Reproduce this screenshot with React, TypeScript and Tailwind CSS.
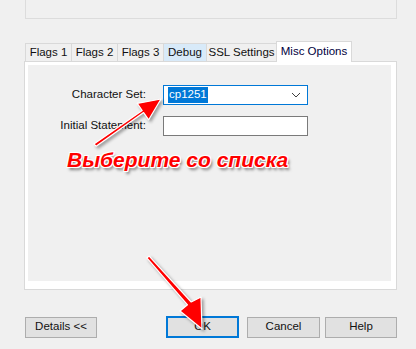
import React from "react";

const tabs = [
  { label: "Flags 1", w: "w-[46px]" },
  { label: "Flags 2", w: "w-[46px]" },
  { label: "Flags 3", w: "w-[46px]" },
  { label: "Debug", w: "w-[43px]", hover: true },
  { label: "SSL Settings", w: "w-[70px]" },
];

function Arrow({ points }: { points: string }) {
  return (
    <polygon
      points={points}
      fill="#ff0000"
      stroke="#ffffff"
      strokeWidth="1.2"
      strokeLinejoin="round"
    />
  );
}

export default function App() {
  return (
    <div
      className="relative h-[349px] w-[416px] overflow-hidden bg-[#f0f0f0] text-[11.5px] leading-none text-[#111]"
      style={{ fontFamily: '"Segoe UI", "Liberation Sans", Arial, sans-serif' }}
    >
      {/* top group box, cut off */}
      <div className="ml-[25px] h-[19px] w-[372px] border-x border-b border-[#dcdcdc]" />

      {/* tab strip */}
      <div className="mt-[22px] ml-[25px] flex h-[20px] items-end">
        {tabs.map((t) => (
          <div
            key={t.label}
            className={`${t.w} flex h-[18px] items-center justify-center border-l border-t border-[#d9d9d9] pt-px ${
              t.hover ? "bg-[#d8eaf9]" : "bg-[#f0f0f0]"
            }`}
          >
            {t.label}
          </div>
        ))}
        <div className="relative z-10 -mb-px flex h-[21px] w-[76px] items-start justify-center border-x border-t border-[#d9d9d9] bg-white pt-[4px] text-[#000040]">
          Misc Options
        </div>
      </div>

      {/* tab page */}
      <div className="ml-[24px] flex h-[229px] w-[373px] flex-col border border-[#d9d9d9] bg-white pb-[8px] pl-[3px] pr-[5px] pt-[3px]">
        <div className="flex-1 bg-[#f0f0f0] pt-[20px]">
          <div className="grid grid-cols-[118px_145px] items-center gap-x-[17px] gap-y-[11px]">
            <div className="text-right">Character Set:</div>
            <div className="flex h-[20px] items-center border border-[#0078d7] bg-white pl-[4px] pr-[6px]">
              <span className="bg-[#0078d7] px-px py-[2px] text-white">cp1251</span>
              <svg className="ml-auto" width="10" height="6" viewBox="0 0 10 6">
                <path d="M1 1 L5 5 L9 1" fill="none" stroke="#404040" strokeWidth="1" />
              </svg>
            </div>
            <div className="text-right">Initial Statement:</div>
            <div className="h-[20px] border border-[#7a7a7a] bg-white" />
          </div>
        </div>
      </div>

      {/* bottom buttons */}
      <div className="mt-[26px] flex items-center">
        <div className="ml-[25px] flex h-[21px] w-[72px] items-center justify-center border border-[#adadad] bg-[#e1e1e1]">
          Details &lt;&lt;
        </div>
        <div className="ml-[69px] flex h-[22px] w-[73px] items-center justify-center border-2 border-[#0078d7] bg-[#e1e1e1]">
          OK
        </div>
        <div className="ml-[8px] flex h-[21px] w-[73px] items-center justify-center border border-[#adadad] bg-[#e1e1e1]">
          Cancel
        </div>
        <div className="ml-[5px] flex h-[21px] w-[72px] items-center justify-center border border-[#adadad] bg-[#e1e1e1]">
          Help
        </div>
      </div>

      {/* annotations */}
      <svg
        className="pointer-events-none absolute left-0 top-0 drop-shadow-[2px_2px_1.5px_rgba(0,0,0,0.35)]"
        width="416"
        height="349"
      >
        <Arrow points="96.1,146.2 143.6,112.6 148.7,119.8 161,99 137.2,103.4 142.2,110.5 93.9,143.9" />
        <Arrow points="146.8,257.9 187.5,304.8 180,311 202,329 201,297 191.2,302 149.2,256.1" />
      </svg>
      <div
        className="absolute left-[67px] top-[149px] text-[21px] font-bold italic text-[#ff0000] [text-shadow:1px_1px_0_#fff,-1px_-1px_0_#fff,1px_-1px_0_#fff,-1px_1px_0_#fff,0_1px_0_#fff,1px_0_0_#fff,2px_3px_3px_rgba(0,0,0,0.5)]"
        style={{ fontFamily: '"Liberation Sans", Arial, sans-serif' }}
      >
        Выберите со списка
      </div>
    </div>
  );
}
